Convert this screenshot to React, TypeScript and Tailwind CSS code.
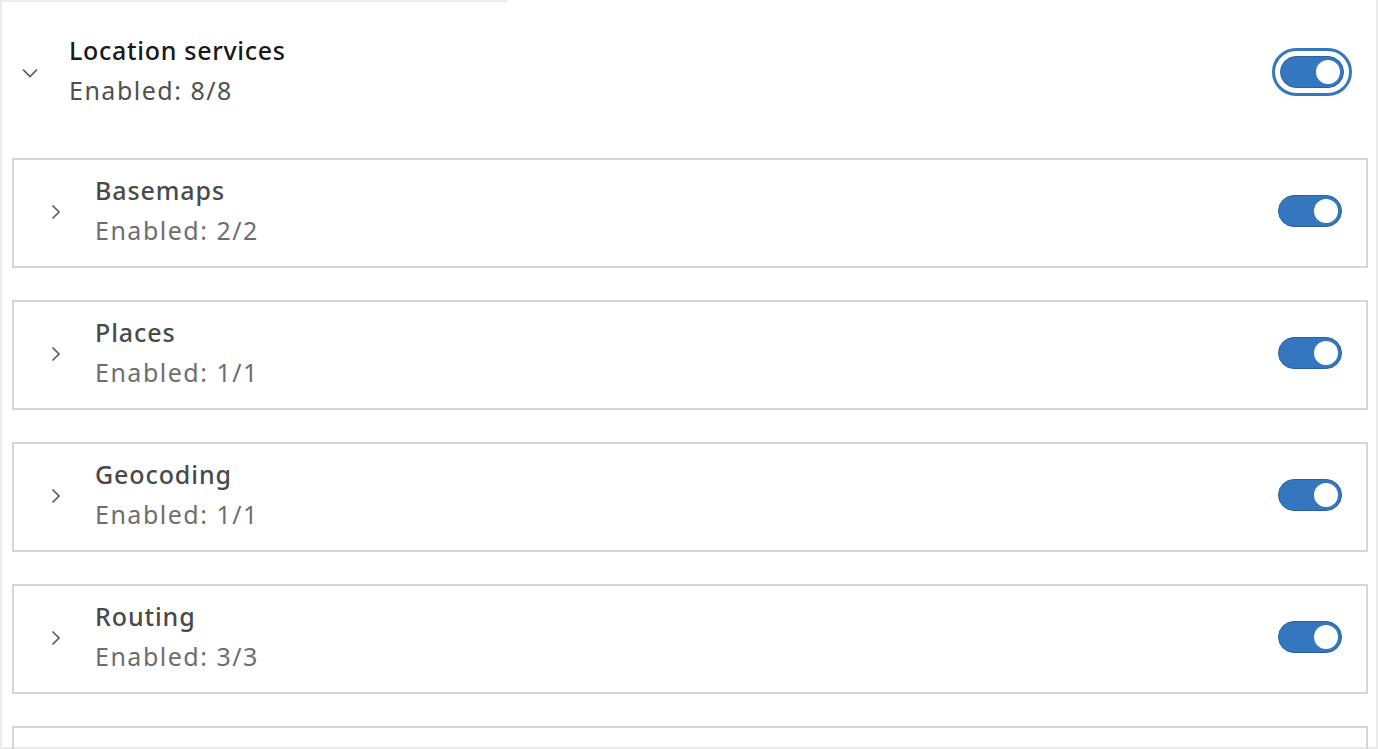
import React from 'react';

type Group = { name: string; enabled: string };

const groups: Group[] = [
  { name: 'Basemaps', enabled: '2/2' },
  { name: 'Places', enabled: '1/1' },
  { name: 'Geocoding', enabled: '1/1' },
  { name: 'Routing', enabled: '3/3' },
];

function ChevronRight() {
  return (
    <svg width="16" height="20" viewBox="0 0 16 20" fill="none">
      <path d="M4.5 3.5 L11 10 L4.5 16.5" stroke="#5c5c5c" strokeWidth="1.7" />
    </svg>
  );
}

function ChevronDown() {
  return (
    <svg width="20" height="16" viewBox="0 0 20 16" fill="none">
      <path d="M3 4.5 L10 11.5 L17 4.5" stroke="#5c5c5c" strokeWidth="1.7" />
    </svg>
  );
}

function Toggle({ focused = false }: { focused?: boolean }) {
  const track = (
    <div className="w-[64px] h-[32px] rounded-full bg-[#3477bf] border border-[#2a62a0] flex items-center justify-end pr-[3px]">
      <div className="w-[24px] h-[24px] rounded-full bg-white" />
    </div>
  );
  if (!focused) return <div className="mb-[4px]">{track}</div>;
  return (
    <div className="w-[80px] h-[48px] rounded-full border-[3px] border-[#3477bf] flex items-center justify-center">
      {track}
    </div>
  );
}

export default function App() {
  return (
    <div
      className="w-[1378px] h-[749px] overflow-hidden bg-white"
      style={{ fontFamily: '"Noto Sans", "Open Sans", sans-serif' }}
    >
      <div className="h-full border-x-2 border-b-2 border-[#ebebeb] flex flex-col">
        <div className="shrink-0 h-[2px] w-[505px] bg-[#ebebeb]" />
        <div className="shrink-0 h-[140px] flex items-center pr-[24px]">
          <div className="w-[67px] flex justify-start pl-[18px] pt-[2px]">
            <ChevronDown />
          </div>
          <div className="flex-1 text-[25px] leading-[40px] pb-[5px]">
            <div className="font-medium text-[#181818] tracking-[0.7px]">Location services</div>
            <div className="text-[#4f4f4f] tracking-[1.5px]">Enabled: 8/8</div>
          </div>
          <Toggle focused />
        </div>
        <div className="shrink-0 pl-[10px] pr-[8px] pt-[16px] flex flex-col gap-[32px]">
          {groups.map((g) => (
            <div
              key={g.name}
              className="shrink-0 h-[110px] border-2 border-[#d6d6d6] flex items-center pr-[24px]"
            >
              <div className="w-[81px] flex justify-center pl-[2px] pb-[2px]">
                <ChevronRight />
              </div>
              <div className="flex-1 text-[25px] leading-[40px] pb-[6px]">
                <div className="font-medium text-[#4a4a4a] tracking-[0.9px]">{g.name}</div>
                <div className="text-[#6e6e6e] tracking-[1.5px]">Enabled: {g.enabled}</div>
              </div>
              <Toggle />
            </div>
          ))}
          <div className="shrink-0 h-[110px] border-2 border-[#d6d6d6]" />
        </div>
      </div>
    </div>
  );
}
